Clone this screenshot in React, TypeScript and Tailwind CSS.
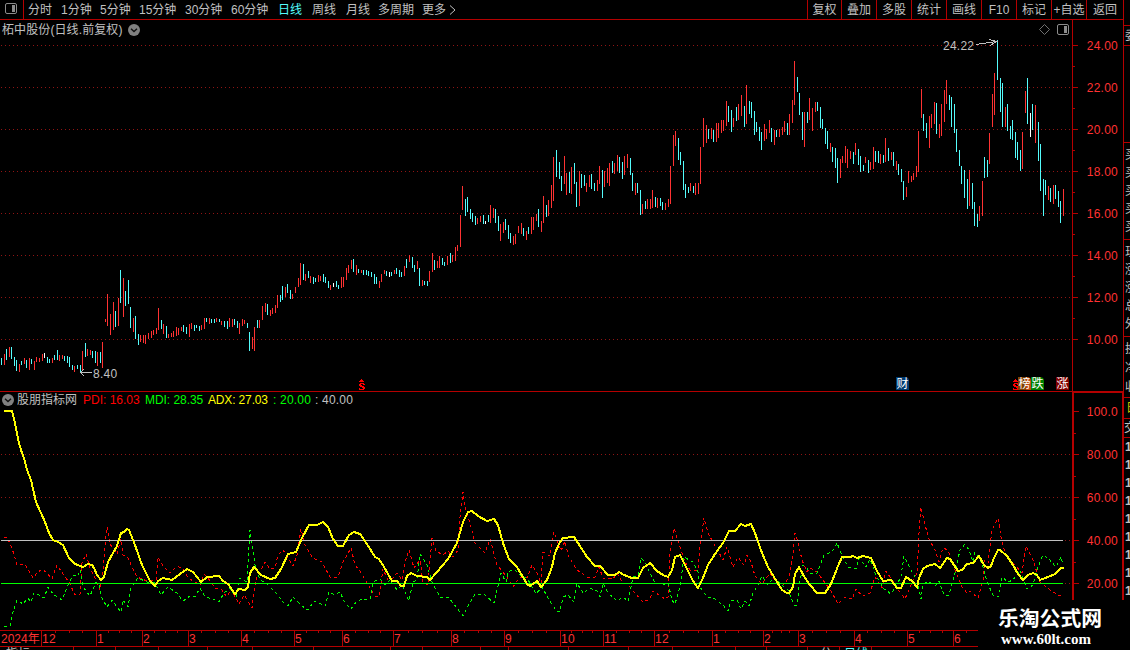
import clsx from "clsx";

// Each bar: colour key (r = up, c = down, w = flat) + x, high y, low y
const BARS = `
c1,358,365 r4,354,365 c6,349,360 r9,347,357 c11,347,359 c14,357,366 c16,360,371 r19,364,372 c21,361,365 r24,358,364
c26,360,368 r29,358,370 c31,359,364 r34,361,370 r36,357,362 r39,358,362 r42,354,361 w44,353,358 c47,357,363 c49,359,363
r52,358,363 c54,355,360 c57,350,360 r59,355,361 r62,355,359 c64,356,361 c67,356,363 c69,357,367 c72,365,370 r74,366,372
c77,365,369 c80,365,373 r82,351,370 c85,343,357 r87,349,356 r90,350,355 c92,351,358 c95,351,363 r97,352,366 c100,352,363
r102,342,368 r105,319,322 r107,294,326 r110,314,335 r113,302,330 c115,311,327 r118,298,326 c120,270,303 r123,278,317
c125,291,306 c128,280,304 c130,307,328 r133,318,332 c135,316,339 c138,334,345 r140,335,342 r143,335,343 r145,335,344
r148,333,339 r151,331,338 r153,330,335 r156,328,334 r158,308,330 c161,320,329 r163,324,334 c166,326,338 r168,334,338
r171,333,337 r173,331,337 r176,327,336 r178,328,335 r181,327,331 c183,325,332 c186,327,334 r189,324,337 r191,323,329
c194,325,331 c196,325,328 c199,326,331 r201,325,330 r204,318,329 c206,318,322 r209,318,324 c211,319,323 c214,319,323
r216,318,322 c219,319,322 r221,321,325 c224,321,327 c227,321,329 r229,318,327 r232,319,327 c234,319,325 c237,321,328
r239,323,334 r242,319,326 r244,320,324 c247,323,328 c249,332,351 r252,337,349 r254,327,351 c257,320,328 r259,320,328
r262,306,320 r265,303,312 c267,304,315 r270,310,316 r272,308,314 r275,305,313 r277,295,308 c280,295,302 c282,286,300
r285,287,297 c287,284,293 c290,290,299 r292,294,299 r295,287,293 r298,278,287 r300,263,285 c303,264,280 r305,274,281
c308,271,278 r310,276,283 c313,277,284 c315,278,282 r318,275,282 r320,276,281 c323,274,282 c325,277,283 c328,281,288
r330,285,290 w333,283,287 c336,281,287 c338,285,289 r341,277,288 r343,277,287 r346,268,280 r348,265,273 r351,260,269
c353,259,272 r356,265,275 c358,269,273 r361,270,273 c363,270,275 c366,270,275 c368,271,276 c371,272,277 c374,274,284
c376,277,284 r379,281,288 r381,274,282 r384,270,274 c386,271,276 w389,272,277 c391,272,276 r394,270,274 c396,268,274
c399,270,277 c401,272,277 r404,266,276 c406,259,268 r409,255,262 c412,257,268 c414,265,272 r417,261,269 c419,268,286
r422,280,286 c424,281,285 c427,281,286 r429,271,282 r432,253,272 c434,260,270 r437,261,268 r439,256,268 c442,258,265
c444,262,266 r447,256,265 c450,253,263 r452,255,262 r455,247,261 r457,245,251 r460,215,247 r462,186,210 c465,199,216
c467,197,212 c470,209,219 c472,213,222 c475,216,225 r477,218,224 r480,216,222 c483,215,224 w485,221,224 c488,215,222
r490,205,223 r493,208,218 c495,209,223 c498,216,231 r500,224,241 r503,222,233 c505,219,230 c508,225,239 c510,233,243
r513,236,245 r515,234,244 r518,226,233 r521,223,234 c523,228,236 r526,231,240 c528,227,234 r531,217,234 r533,217,230
r536,214,221 c538,209,227 r541,221,232 r543,196,223 c546,205,217 r548,200,216 r551,185,208 r553,157,201 c556,150,177
c559,162,179 c561,176,191 r564,156,184 r566,173,195 c569,172,193 r571,167,194 c574,163,184 c576,182,207 r579,171,206
c581,174,188 c584,175,186 r586,183,192 r589,175,187 c591,174,189 c594,183,191 r597,180,191 r599,166,184 c602,170,198
r604,171,187 r607,168,183 r609,163,186 c612,161,173 r614,163,174 r617,155,171 c619,157,173 c622,162,179 r624,156,175
r627,154,168 c630,158,175 c632,173,191 r635,183,195 c637,183,193 c640,190,215 r642,204,214 c645,201,209 r647,199,209
r650,199,209 r652,190,208 c655,197,207 r657,198,208 c660,198,206 c662,202,210 r665,203,210 r668,199,207 r670,166,204
r673,135,166 r675,131,146 c678,138,160 c680,152,165 c683,161,190 c685,184,198 c688,187,193 r690,183,191 c693,186,193
r695,183,195 r698,183,194 r700,147,184 r703,118,147 r706,125,143 c708,129,139 r711,128,139 c713,130,142 r716,123,142
r718,123,138 r721,120,133 r723,120,131 r726,101,126 c728,106,122 c731,110,132 r733,118,127 c736,107,121 r738,104,120
r741,95,116 c744,106,127 r746,85,124 c749,101,114 c751,102,118 c754,111,135 c756,122,132 c759,127,141 c761,132,150
r764,124,141 r766,129,139 r769,120,133 c771,128,142 r774,130,145 c776,130,137 r779,129,137 r782,127,135 r784,121,132
c787,123,135 r789,114,135 r792,100,123 r794,61,105 c797,77,92 c799,93,115 c802,112,140 r804,112,147 c807,112,123
r809,98,120 r812,108,131 r815,102,112 c817,102,111 c820,107,128 c822,119,129 c825,128,144 c827,131,149 r830,143,152
c832,147,162 c835,148,168 c837,158,183 r840,159,178 r842,156,163 r845,146,163 r847,149,168 r850,151,159 c853,152,164
r855,143,155 c858,149,165 c860,156,172 c863,165,171 r865,157,163 c868,160,173 r870,162,170 r873,147,169 c875,151,162
c878,151,163 r880,154,164 c883,155,163 r885,138,162 c888,148,161 r891,152,160 c893,152,166 r896,161,170 c898,164,175
c901,169,182 c903,181,200 r906,187,197 r908,171,183 r911,176,182 r913,173,180 r916,166,177 r918,131,172 r921,89,118
c923,114,131 c926,123,138 r929,116,148 r931,114,128 r934,102,124 c936,103,134 r939,124,138 r941,104,136 r944,90,122
r946,80,104 c949,95,110 c951,97,127 c954,104,133 c956,129,152 c959,150,166 c961,166,184 c964,170,198 c967,179,209
r969,170,206 c972,183,209 c974,202,226 c977,214,227 r979,206,221 r982,181,216 c984,157,178 c987,160,177 r989,133,164
r992,94,127 r994,73,115 c997,40,80 c1000,78,112 c1002,83,127 r1005,107,127 c1007,104,131 c1010,126,139 c1012,120,140
c1015,132,158 c1017,142,160 c1020,150,171 r1022,132,169 r1025,91,113 c1027,78,124 w1030,113,137 c1032,104,130
r1035,105,143 c1038,122,161 c1040,144,191 c1043,179,216 c1045,180,195 r1048,186,200 c1050,188,202 r1053,185,204
c1055,185,199 c1058,191,207 c1060,201,223 r1063,189,216`
  .trim()
  .split(/\s+/)
  .map((s) => {
    const [x, high, low] = s.slice(1).split(",").map(Number);
    return { kind: s[0], x, high, low };
  });

const BAR_COLOR: Record<string, string> = { r: "#ff3232", c: "#54fcfc", w: "#ffffff" };

const ADX =
  "4,411 12,411 15,423 17,434 19,443 22,453 24,458 27,470 31,480 36,502 41,513 45,522 49,533 53,540 58,542 63,545 69,558 75,564 83,567 88,564 92,565 94,568 97,575 101,580 104,577 108,562 117,546 121,533 124,532 127,529 129,530 135,545 142,565 150,581 155,586 158,581 163,578 172,580 180,574 187,569 193,572 201,582 207,577 219,576 223,581 228,584 235,594 239,589 245,590 248,587 250,573 254,567 261,575 270,579 275,578 281,569 288,554 296,552 302,538 309,525 317,525 323,522 328,527 333,539 338,546 343,546 349,535 354,532 360,534 367,544 375,557 379,559 384,567 392,581 397,581 401,586 404,586 407,576 411,573 417,576 427,577 430,580 437,572 448,559 457,543 463,522 468,512 472,511 478,516 487,521 494,519 498,525 503,543 509,559 517,567 527,584 530,586 537,581 541,587 547,580 552,567 555,553 560,542 563,538 574,537 578,543 587,557 595,566 600,566 608,575 615,575 619,572 624,575 632,578 638,578 643,568 650,563 657,571 663,575 668,577 672,570 675,557 680,555 685,565 693,581 698,588 703,578 708,565 715,554 723,543 729,531 735,531 741,524 745,526 751,524 755,533 762,553 768,567 774,577 782,590 787,593 789,593 793,587 795,574 799,567 805,578 810,585 817,593 825,593 831,584 838,566 842,557 850,557 853,556 857,558 863,556 871,558 877,571 883,581 891,580 897,588 901,588 906,577 912,581 917,587 919,578 923,569 927,566 935,564 940,568 947,558 950,559 958,571 962,570 967,564 973,563 979,556 984,565 988,568 991,566 994,558 998,550 1000,550 1007,556 1013,565 1018,574 1023,580 1028,575 1033,573 1037,575 1040,580 1048,577 1055,574 1061,568 1064,568";

const PDI =
  "4,537 7,537 12,548 17,565 25,564 33,578 37,573 42,569 46,572 52,579 57,565 63,574 69,582 75,595 80,594 82,563 86,554 90,568 95,578 100,590 103,570 105,545 107,527 110,544 117,554 121,539 123,555 128,558 133,569 137,577 147,581 156,580 158,557 163,566 170,573 177,566 183,569 188,578 200,585 204,574 208,578 215,588 221,589 227,597 231,589 239,604 244,595 252,608 254,593 257,575 260,572 265,562 270,569 275,568 278,555 283,550 288,558 293,566 297,555 301,529 305,545 313,558 322,562 330,577 338,577 343,562 351,548 355,565 360,571 367,583 375,596 379,597 383,569 388,580 393,578 397,573 402,580 405,562 409,550 414,568 420,560 423,582 428,585 432,538 436,551 443,555 448,551 453,557 458,550 460,517 463,492 465,507 470,523 475,543 485,553 490,539 493,550 497,565 507,577 513,587 520,577 527,578 532,565 537,573 541,583 543,552 550,556 554,532 557,540 561,551 565,541 568,555 577,570 587,577 595,577 599,567 603,578 613,579 617,573 622,582 628,585 635,593 643,602 650,599 653,591 665,599 668,597 670,553 674,528 680,547 685,562 690,570 698,570 700,547 704,518 708,533 713,542 723,560 727,547 733,567 738,557 744,565 747,555 751,562 755,576 762,584 770,573 775,580 782,586 789,578 793,553 795,533 798,542 802,560 807,572 810,568 817,572 823,580 831,591 838,604 845,597 852,599 856,589 862,596 870,593 875,577 882,588 886,571 892,580 897,588 905,599 910,587 913,580 917,573 919,533 921,507 925,525 930,542 934,547 939,562 943,548 948,550 955,570 962,587 967,593 970,591 978,598 983,580 985,560 988,563 992,530 998,518 1001,537 1005,553 1013,563 1022,573 1026,546 1033,560 1040,582 1050,590 1060,596 1063,593";

const MDI =
  "4,626 10,626 13,612 17,600 23,604 28,598 31,602 34,593 39,595 44,598 48,587 53,594 62,600 68,585 73,575 78,576 80,570 83,587 90,596 96,582 99,585 102,598 107,607 112,600 121,612 123,600 128,607 131,588 135,582 138,578 147,582 155,583 161,595 168,587 177,593 183,601 190,596 195,597 200,588 205,597 213,599 219,602 224,593 230,588 236,597 240,578 247,582 250,530 252,545 255,565 260,580 267,584 275,592 283,602 288,606 293,597 302,606 308,610 314,601 325,606 329,592 335,595 340,592 345,603 351,609 357,601 363,599 370,599 373,582 380,579 385,585 390,580 397,590 402,585 409,601 413,582 417,580 420,554 427,565 432,582 440,597 448,597 457,608 463,616 467,608 475,594 485,595 494,603 497,590 501,573 506,582 508,572 514,569 522,577 527,578 536,594 542,587 548,598 557,612 560,611 563,597 568,595 574,602 577,583 583,593 590,588 597,591 600,597 603,583 608,593 617,601 623,597 628,601 633,577 638,576 641,558 645,562 650,573 655,583 665,585 668,583 672,600 675,604 680,587 684,557 693,562 698,572 700,587 707,597 715,599 723,605 728,611 731,601 737,600 741,609 745,601 749,606 753,593 758,585 762,576 768,585 774,577 782,585 788,590 794,605 797,605 799,587 803,565 807,568 810,573 817,573 824,555 832,552 837,543 842,555 848,567 856,569 859,558 866,567 870,559 875,573 883,588 891,594 897,585 901,576 904,556 911,570 917,580 921,599 923,585 928,581 935,586 939,581 944,595 949,595 955,573 960,550 965,544 969,550 973,562 975,552 982,563 987,582 993,595 998,597 1002,577 1008,582 1013,580 1020,570 1027,589 1033,585 1038,567 1043,555 1048,558 1056,567 1061,557 1063,565";

const PERIODS = [
  { label: "分时", width: "w-[33px]" },
  { label: "1分钟", width: "w-[39px]" },
  { label: "5分钟", width: "w-[39px]" },
  { label: "15分钟", width: "w-[46px]" },
  { label: "30分钟", width: "w-[46px]" },
  { label: "60分钟", width: "w-[47px]" },
  { label: "日线", width: "w-[34px]", active: true },
  { label: "周线", width: "w-[34px]" },
  { label: "月线", width: "w-[32px]" },
  { label: "多周期", width: "w-[44px]" },
  { label: "更多", width: "w-[27px]" },
];

const ACTIONS = ["复权", "叠加", "多股", "统计", "画线", "F10", "标记", "+自选", "返回"];

const PRICES = ["24.00", "22.00", "20.00", "18.00", "16.00", "14.00", "12.00", "10.00"];
const LEVELS = ["100.0", "80.00", "60.00", "40.00", "20.00"];

const MONTHS = [
  { x: 41, label: "12" },
  { x: 96, label: "1" },
  { x: 142, label: "2" },
  { x: 188, label: "3" },
  { x: 241, label: "4" },
  { x: 294, label: "5" },
  { x: 342, label: "6" },
  { x: 393, label: "7" },
  { x: 451, label: "8" },
  { x: 504, label: "9" },
  { x: 560, label: "10" },
  { x: 603, label: "11" },
  { x: 654, label: "12" },
  { x: 712, label: "1" },
  { x: 763, label: "2" },
  { x: 798, label: "3" },
  { x: 854, label: "4" },
  { x: 907, label: "5" },
  { x: 953, label: "6" },
  { x: 1005, label: "" },
];

const FOOTER_TICKS = [73, 115, 158, 207, 252, 313, 390, 422, 480, 508, 568, 628, 672, 735, 766, 807, 839, 871];

const LEGEND = [
  { text: "PDI: 16.03", style: "w-[62px] text-[#ff0000]" },
  { text: "MDI: 28.35", style: "w-[63px] tracking-[-0.05px] text-[#00ff00]" },
  { text: "ADX: 27.03", style: "w-[65px] tracking-[-0.15px] text-[#ffff00]" },
  { text: ": 20.00", style: "w-[42px] tracking-[0.2px] text-[#00ff00]" },
  { text: ": 40.00", style: "w-[42px] tracking-[0.2px] text-[#c0c0c0]" },
];

function PanelIcon({ className }: { className?: string }) {
  return (
    <svg width="12" height="11" viewBox="0 0 12 11" className={className}>
      <rect x="0.5" y="0.5" width="11" height="10" rx="1.5" fill="none" stroke="#8c8c8c" />
      <rect x="7" y="2" width="3" height="7" fill="#8c8c8c" />
    </svg>
  );
}

function DropdownDot() {
  return (
    <svg width="12" height="12" viewBox="0 0 12 12" className="shrink-0">
      <circle cx="6" cy="6" r="6" fill="#808080" />
      <path d="M3 4.8 L6 7.6 L9 4.8" fill="none" stroke="#101010" strokeWidth="1.4" />
    </svg>
  );
}

function TopBar() {
  return (
    <header className="flex h-5 w-[1124px] border-b border-[#b40000] text-[#c0c0c0]">
      <div className="flex w-6 items-start border-r border-[#b40000] pt-[3px] pl-[5px]">
        <PanelIcon />
      </div>
      <nav className="flex items-center pl-1">
        {PERIODS.map((p) => (
          <button
            key={p.label}
            type="button"
            className={clsx("text-left leading-none whitespace-nowrap", p.width, p.active && "text-[#54fcfc]")}
          >
            {p.label}
          </button>
        ))}
        <svg width="7" height="10" viewBox="0 0 7 10">
          <path d="M1 0.5 L6 5 L1 9.5" fill="none" stroke="#c0c0c0" />
        </svg>
      </nav>
      <div className="ml-auto flex border-r border-[#b40000]">
        {ACTIONS.map((a) => (
          <button
            key={a}
            type="button"
            className="flex w-[35px] items-center justify-center border-l border-[#b40000] leading-none whitespace-nowrap first:w-[34px] last:w-[37px]"
          >
            {a}
          </button>
        ))}
      </div>
    </header>
  );
}

function Badge({ text, className }: { text: string; className: string }) {
  return (
    <span
      className={clsx(
        "absolute top-[357px] flex h-[13px] w-[13px] items-center justify-center rounded-tr-sm leading-none text-white",
        className
      )}
    >
      {text}
    </span>
  );
}

function DividendMark({ className }: { className: string }) {
  return (
    <svg width="7" height="12" viewBox="0 0 7 12" shapeRendering="crispEdges" className={clsx("absolute", className)}>
      <path d="M2 0h1v1h1v1h1v1H0V2h1V1h1z" fill="#ff0000" />
      <path d="M1 4h4v1h1v1H4V5H2v1h1v1h2v1h1v2H5v1H0V9h1v1h3V9H3V8H1V7H0V5h1z" fill="#ff0000" />
    </svg>
  );
}

function PricePanel() {
  return (
    <section className="relative h-[372px] border-b border-[#b40000]">
      <svg
        width="1072"
        height="371"
        viewBox="0 20 1072 371"
        shapeRendering="crispEdges"
        className="absolute top-0 left-0"
      >
        {PRICES.map((p, i) => (
          <line
            key={p}
            x1="1"
            x2="1072"
            y1={45.5 + i * 42}
            y2={45.5 + i * 42}
            stroke="#901414"
            strokeDasharray="1 3"
          />
        ))}
        {BARS.map((b) => (
          <rect key={b.x} x={b.x} y={b.high} width="1" height={b.low - b.high} fill={BAR_COLOR[b.kind]} />
        ))}
        <path d="M976 44.5 L997 41.5 M989 39.5 L997 41.5 L990 45.5" fill="none" stroke="#c0c0c0" />
        <path d="M92 372.5 H80 M84 369 L80.5 372.5 L84 376" fill="none" stroke="#c0c0c0" />
      </svg>

      <div className="relative flex h-[19px] items-center pl-0.5 text-[#c0c0c0]">
        <h1 className="w-[126px] leading-none tracking-[0.1px] whitespace-nowrap">柘中股份(日线.前复权)</h1>
        <DropdownDot />
        <svg width="11" height="11" viewBox="0 0 11 11" className="ml-auto">
          <path d="M5.5 0.5 L10.5 5.5 L5.5 10.5 L0.5 5.5 Z" fill="none" stroke="#707070" />
        </svg>
        <PanelIcon className="mr-[3px] ml-[7px]" />
      </div>

      <span className="absolute top-[19px] left-[943px] leading-[14px] tracking-[0.25px] text-[#c0c0c0]">24.22</span>
      <span className="absolute top-[347px] left-[93px] leading-[14px] tracking-[0.25px] text-[#c0c0c0]">8.40</span>

      <DividendMark className="top-[359px] left-[359px]" />
      <Badge text="财" className="left-[896px] bg-[#003a70]" />
      <DividendMark className="top-[359px] left-[1013px]" />
      <Badge text="榜" className="left-[1018px] bg-[linear-gradient(90deg,#804000_60%,#c04810_60%)]" />
      <Badge text="跌" className="left-[1031px] bg-[#008000]" />
      <Badge text="涨" className="left-[1056px] bg-[#800000]" />
    </section>
  );
}

function IndicatorPanel() {
  return (
    <section className="relative h-[238px]">
      <svg
        width="1072"
        height="238"
        viewBox="0 392 1072 238"
        shapeRendering="crispEdges"
        className="absolute top-0 left-0"
      >
        {[454.5, 497.5, 540.5, 583.5].map((y) => (
          <line key={y} x1="1" x2="1072" y1={y} y2={y} stroke="#901414" strokeDasharray="1 3" />
        ))}
        <polyline points={PDI} fill="none" stroke="#ff0000" strokeDasharray="3 3" />
        <polyline points={MDI} fill="none" stroke="#00ff00" strokeDasharray="3 3" />
        <line x1="1" x2="1063" y1="583.5" y2="583.5" stroke="#00ff00" />
        <line x1="1" x2="1063" y1="540.5" y2="540.5" stroke="#c0c0c0" />
        <polyline points={ADX} fill="none" stroke="#ffff00" strokeWidth="2" />
      </svg>
      <div className="relative flex h-4 items-center pl-0.5 leading-none whitespace-nowrap">
        <DropdownDot />
        <h2 className="ml-[3px] w-[66px] text-[#c0c0c0]">股朋指标网</h2>
        {LEGEND.map((l) => (
          <span key={l.text} className={l.style}>
            {l.text}
          </span>
        ))}
      </div>
    </section>
  );
}

function TimeAxis() {
  return (
    <div className="relative flex h-[17px] border-y border-[#b40000] leading-[17px] whitespace-nowrap text-[#ff3232]">
      <svg width="1072" height="3" shapeRendering="crispEdges" className="absolute top-0 left-0">
        {MONTHS.slice(0, -1).map((m, i) => {
          const step = (MONTHS[i + 1].x - m.x) / 4;
          return [1, 2, 3].map((n) => (
            <rect key={`${m.x}-${n}`} x={Math.round(m.x + step * n)} y="0" width="1" height="2" fill="#b40000" />
          ));
        })}
      </svg>
      <span className="w-[41px] shrink-0 pl-px">2024年</span>
      {MONTHS.slice(0, -1).map((m, i) => (
        <span
          key={m.x}
          className="shrink-0 border-l border-[#b40000] tracking-[0.25px]"
          style={{ width: MONTHS[i + 1].x - m.x }}
        >
          {m.label}
        </span>
      ))}
    </div>
  );
}

function FooterStrip() {
  return (
    <div className="relative h-[3px] overflow-hidden text-[#c0c0c0]">
      <svg width="978" height="3" shapeRendering="crispEdges" className="absolute top-0 left-0">
        {FOOTER_TICKS.map((x) => (
          <rect key={x} x={x} y="0" width="1" height="3" fill="#b40000" />
        ))}
      </svg>
      <div className="flex pt-px leading-3">
        <span className="w-[820px] pl-1.5">指标</span>
        <span className="w-6">分</span>
        <span className="text-[#54fcfc]">日线</span>
      </div>
    </div>
  );
}

function AxisRow({ label, className }: { label?: string; className: string }) {
  return (
    <div className={clsx("flex items-center", className)}>
      <span className={clsx("h-px bg-[#b40000]", label ? "w-[5px]" : "w-0.5")} />
      {label && <span className="ml-auto leading-none tracking-[0.25px]">{label}</span>}
    </div>
  );
}

function ValueAxis() {
  return (
    <aside className="w-[51px] text-[#ff3232]">
      <div className="h-[371px] border-l border-[#b40000] pt-[15px]">
        {PRICES.map((p, i) => (
          <div key={p}>
            <AxisRow label={p} className="h-[21px] pr-[5px]" />
            {i < PRICES.length - 1 && <AxisRow className="h-[21px]" />}
          </div>
        ))}
      </div>
      <div className="h-[209px] w-[52px] border-2 border-b-0 border-[#b40000] pt-[8px]">
        {LEVELS.map((p, i) => (
          <div key={p}>
            <AxisRow label={p} className="h-[21px] pr-1" />
            {i < LEVELS.length - 1 && <AxisRow className="h-[22px]" />}
          </div>
        ))}
      </div>
    </aside>
  );
}

// Quote column; only its left edge fits in the window
function QuoteStrip() {
  const cell = "shrink-0 overflow-hidden border-b border-[#b40000]";
  return (
    <aside className="flex w-[7px] flex-col overflow-hidden border-l border-[#b40000] text-[#c0c0c0]">
      <div className={clsx(cell, "h-1.5")} />
      <div className={clsx(cell, "h-5 w-3 pl-px leading-5")}>委</div>
      <div className={clsx(cell, "h-[97px]")} />
      <div className={clsx(cell, "h-[97px] w-4 pt-[3px] pl-px")}>
        {[1, 2, 3, 4, 5].map((n) => (
          <div key={n} className="h-[18px] leading-[18px]">
            买
          </div>
        ))}
      </div>
      <div className={clsx(cell, "h-[97px] w-4 pt-[3px] pl-px")}>
        {["现", "涨", "涨", "总", "外"].map((t, n) => (
          <div key={n} className="h-[18px] leading-[18px]">
            {t}
          </div>
        ))}
      </div>
      <div className={clsx(cell, "h-[61px] w-4 pt-[3px] pl-px")}>
        {["换", "净", "收"].map((t) => (
          <div key={t} className="h-[19px] leading-[19px]">
            {t}
          </div>
        ))}
      </div>
      <div className={clsx(cell, "h-[21px] w-4 pl-0.5 leading-5 text-[#c8c800]")}>日</div>
      <div className={clsx(cell, "h-[19px] w-4 leading-[18px]")}>交</div>
      <div className="w-4 pl-px font-bold">
        {[1, 2, 3, 4, 5, 6, 7, 8, 9].map((n) => (
          <div key={n} className="h-[18px] leading-[18px]">
            1
          </div>
        ))}
      </div>
    </aside>
  );
}

export default function App() {
  return (
    <div className="relative h-[650px] w-[1130px] overflow-hidden bg-black font-['Liberation_Sans','Noto_Sans_CJK_SC',sans-serif] text-[12px]">
      <TopBar />
      <div className="flex h-[630px]">
        <main className="w-[1072px] shrink-0">
          <PricePanel />
          <IndicatorPanel />
          <TimeAxis />
          <FooterStrip />
        </main>
        <ValueAxis />
        <QuoteStrip />
      </div>

      <div className="absolute right-0 bottom-0 h-[50px] w-[152px] bg-black pt-2 pl-5 text-white">
        <div className="text-[20.8px] leading-[22px] font-bold whitespace-nowrap">乐淘公式网</div>
        <div className="pl-[3px] font-['Liberation_Serif',serif] text-[15px] leading-[18px] font-bold">
          www.60lt.com
        </div>
      </div>
    </div>
  );
}
